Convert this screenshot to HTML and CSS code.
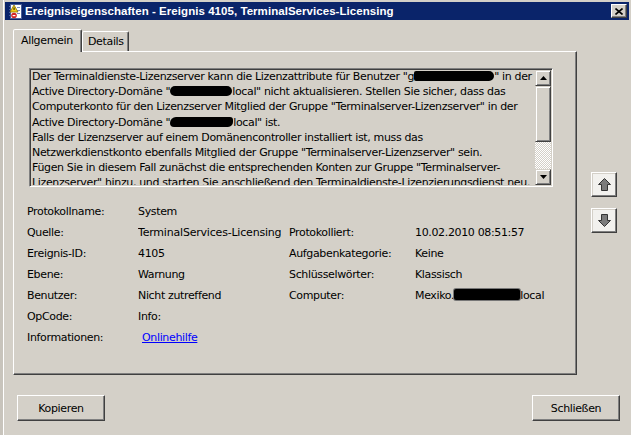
FILE: index.html
```html
<!DOCTYPE html>
<html lang="de">
<head>
<meta charset="utf-8">
<title>Ereigniseigenschaften</title>
<link rel="stylesheet" href="styles.css">
</head>
<body>
<div class="window">
  <div class="titlebar">
    <svg class="app-icon" width="13" height="15" viewBox="0 0 13 15">
      <rect x="1.5" y="0.5" width="11" height="14" fill="#fff" stroke="#4a5f9a"/>
      <rect x="0" y="2" width="2" height="1" fill="#4a5f9a"/>
      <rect x="0" y="5" width="2" height="1" fill="#4a5f9a"/>
      <rect x="0" y="8" width="2" height="1" fill="#4a5f9a"/>
      <rect x="0" y="11" width="2" height="1" fill="#4a5f9a"/>
      <rect x="8" y="3" width="3" height="1" fill="#7d8fc0"/>
      <rect x="8" y="6" width="3" height="1" fill="#7d8fc0"/>
      <rect x="8" y="9" width="3" height="1" fill="#7d8fc0"/>
      <polygon points="5,1 9,8 1,8" fill="#f3cf1a" stroke="#8a6d00" stroke-width="0.8"/>
      <rect x="4.6" y="3.5" width="0.9" height="2.4" fill="#000"/>
      <circle cx="5" cy="11.5" r="2.8" fill="#d42424"/>
      <rect x="3.6" y="11" width="2.8" height="1.2" fill="#fff"/>
    </svg>
    <span class="title">Ereigniseigenschaften - Ereignis 4105, TerminalServices-Licensing</span>
    <button class="close" aria-label="Schließen">
      <svg width="8" height="7" viewBox="0 0 8 7"><path d="M0.5 0.5 L7.5 6.5 M7.5 0.5 L0.5 6.5" stroke="#000" stroke-width="1.6"/></svg>
    </button>
  </div>

  <div class="client">
    <div class="main">
      <div class="tabs">
        <div class="tabstrip">
          <div class="tab active">Allgemein</div>
          <div class="tab">Details</div>
        </div>
        <div class="panel">
          <div class="desc">
            <div class="desc-text">
              <div class="line">Der Terminaldienste-Lizenzserver kann die Lizenzattribute für Benutzer "g<span class="blot blot-a"></span>" in der</div>
              <div class="line">Active Directory-Domäne "<span class="blot blot-b"></span>local" nicht aktualisieren. Stellen Sie sicher, dass das</div>
              <div class="line">Computerkonto für den Lizenzserver Mitglied der Gruppe "Terminalserver-Lizenzserver" in der</div>
              <div class="line">Active Directory-Domäne "<span class="blot blot-c"></span>local" ist.</div>
              <div class="line">Falls der Lizenzserver auf einem Domänencontroller installiert ist, muss das</div>
              <div class="line">Netzwerkdienstkonto ebenfalls Mitglied der Gruppe "Terminalserver-Lizenzserver" sein.</div>
              <div class="line">Fügen Sie in diesem Fall zunächst die entsprechenden Konten zur Gruppe "Terminalserver-</div>
              <div class="line">Lizenzserver" hinzu, und starten Sie anschließend den Terminaldienste-Lizenzierungsdienst neu.</div>
            </div>
            <div class="vscroll">
              <div class="sbtn">
                <svg width="7" height="4" viewBox="0 0 7 4"><polygon points="3.5,0 7,4 0,4" fill="#000"/></svg>
              </div>
              <div class="thumb"></div>
              <div class="track"></div>
              <div class="sbtn">
                <svg width="7" height="4" viewBox="0 0 7 4"><polygon points="0,0 7,0 3.5,4" fill="#000"/></svg>
              </div>
            </div>
          </div>

          <div class="props">
            <div class="lbl">Protokollname:</div><div class="val">System</div><div></div><div></div>
            <div class="lbl">Quelle:</div><div class="val clip">TerminalServices-Licensing</div><div class="lbl">Protokolliert:</div><div class="val">10.02.2010 08:51:57</div>
            <div class="lbl">Ereignis-ID:</div><div class="val">4105</div><div class="lbl">Aufgabenkategorie:</div><div class="val">Keine</div>
            <div class="lbl">Ebene:</div><div class="val">Warnung</div><div class="lbl">Schlüsselwörter:</div><div class="val">Klassisch</div>
            <div class="lbl">Benutzer:</div><div class="val">Nicht zutreffend</div><div class="lbl">Computer:</div><div class="val">Mexiko.<span class="blot blot-d"></span>local</div>
            <div class="lbl">OpCode:</div><div class="val">Info:</div><div></div><div></div>
            <div class="lbl">Informationen:</div><div class="val"><a class="link" href="#">Onlinehilfe</a></div><div></div><div></div>
          </div>
        </div>
      </div>

      <div class="nav">
        <button class="navbtn" aria-label="Vorheriges Ereignis">
          <svg width="13" height="13" viewBox="0 0 13 13"><polygon points="6.5,0.5 12.5,6.5 9.5,6.5 9.5,12.5 3.5,12.5 3.5,6.5 0.5,6.5" fill="#7b7b7b" stroke="#333" stroke-width="1" stroke-linejoin="round"/></svg>
        </button>
        <button class="navbtn" aria-label="Nächstes Ereignis">
          <svg width="13" height="13" viewBox="0 0 13 13"><polygon points="6.5,12.5 12.5,6.5 9.5,6.5 9.5,0.5 3.5,0.5 3.5,6.5 0.5,6.5" fill="#7b7b7b" stroke="#333" stroke-width="1" stroke-linejoin="round"/></svg>
        </button>
      </div>
    </div>

    <div class="footer">
      <button class="btn">Kopieren</button>
      <button class="btn">Schließen</button>
    </div>
  </div>
</div>
</body>
</html>
```

FILE: styles.css
```css
* { box-sizing: border-box; }

html, body {
  margin: 0;
  width: 631px;
  height: 435px;
  overflow: hidden;
  background: #d4d0c8;
}

body {
  font-family: "DejaVu Sans", Verdana, sans-serif;
  font-size: 11px;
  letter-spacing: -0.35px;
  color: #000;
}

.window {
  height: 435px;
  padding: 2px 2px 0 5px;
  background: linear-gradient(to right, #c8c4bc 0 3px, #ffffff 3px 4px, #d4d0c8 4px);
  display: flex;
  flex-direction: column;
}

/* title bar */
.titlebar {
  height: 18px;
  background: #0a246a;
  display: flex;
  align-items: center;
  padding-left: 4px;
  padding-right: 2px;
}

.app-icon { flex: none; }

.title {
  margin-left: 3px;
  flex: 1;
  color: #fff;
  font-family: "Liberation Sans", Arial, sans-serif;
  font-weight: bold;
  font-size: 11.5px;
  letter-spacing: 0.05px;
  white-space: nowrap;
}

.close {
  width: 16px;
  height: 14px;
  padding: 0;
  margin: 0;
  background: #d4d0c8;
  border: 1px solid;
  border-color: #fff #404040 #404040 #fff;
  box-shadow: inset -1px -1px #808080;
  display: flex;
  align-items: center;
  justify-content: center;
}

/* client area */
.client {
  flex: 1;
  display: flex;
  flex-direction: column;
  padding-top: 9px;
}

.main {
  display: flex;
  padding-left: 8px;
}

.tabs {
  width: 564px;
  display: flex;
  flex-direction: column;
}

.tabstrip {
  height: 22px;
  display: flex;
  align-items: flex-end;
}

.tab {
  height: 20px;
  width: 47px;
  padding-left: 5px;
  padding-top: 3px;
  border: 1px solid;
  border-bottom: 0;
  border-color: #fff #404040 transparent #fff;
  border-radius: 2px 2px 0 0;
  box-shadow: inset -1px 0 #808080;
  background: #d4d0c8;
  white-space: nowrap;
}

.tab.active {
  height: 23px;
  width: 69px;
  padding-left: 7px;
  padding-top: 4px;
  margin-bottom: -1px;
  position: relative;
  z-index: 1;
}

.panel {
  height: 324px;
  border: 1px solid;
  border-color: #fff #404040 #404040 #fff;
  box-shadow: inset -1px -1px #808080;
  padding: 16px 0 0 13px;
}

/* description box */
.desc {
  width: 524px;
  height: 119px;
  margin-left: 2px;
  border: 1px solid;
  border-color: #808080 #fff #fff #808080;
  box-shadow: inset 1px 1px #404040, inset -1px -1px #d4d0c8;
  padding: 1px;
  display: flex;
}

.desc-text {
  flex: 1;
  overflow: hidden;
  padding-left: 1px;
  margin-top: -1px;
  line-height: 15.2px;
}

.line { white-space: nowrap; }

.vscroll {
  width: 16px;
  display: flex;
  flex-direction: column;
}

.sbtn, .thumb {
  background: #d4d0c8;
  border: 1px solid;
  border-color: #d4d0c8 #404040 #404040 #d4d0c8;
  box-shadow: inset 1px 1px #fff, inset -1px -1px #808080;
}

.sbtn {
  height: 16px;
  display: flex;
  align-items: center;
  justify-content: center;
}

.thumb { height: 56px; }

.track {
  flex: 1;
  background: repeating-conic-gradient(#ffffff 0 25%, #d4d0c8 0 50%) 0 0 / 2px 2px;
}

.blot {
  display: inline-block;
  height: 10px;
  background: #000;
  border-radius: 5px;
  vertical-align: -1px;
}
.blot-a { width: 80px; border-radius: 2px 5px 5px 2px; }
.blot-b { width: 62px; }
.blot-c { width: 63px; border-radius: 6px 3px 5px 4px; }
.blot-d { width: 66px; height: 11px; border-radius: 2px; box-shadow: 0 0 0 1px #777; }

/* properties */
.props {
  margin-top: 14px;
  display: grid;
  grid-template-columns: 111px 151px 126px 1fr;
  grid-auto-rows: 21px;
  align-items: center;
}

.val { white-space: nowrap; }
.val.clip { width: 143px; overflow: hidden; letter-spacing: -0.2px; }

.link {
  color: #0000ff;
  text-decoration: underline;
  margin-left: 4px;
}

/* previous / next */
.nav {
  padding-top: 143px;
  margin-left: 14px;
  display: flex;
  flex-direction: column;
  gap: 11px;
}

.navbtn {
  width: 26px;
  height: 25px;
  padding: 0;
  margin: 0;
  background: #f2f1ee;
  border: 1px solid;
  border-color: #fff #404040 #404040 #fff;
  box-shadow: inset -1px -1px #808080, inset 1px 1px #d4d0c8;
  display: flex;
  align-items: center;
  justify-content: center;
}

/* footer */
.footer {
  display: flex;
  justify-content: space-between;
  padding: 20px 9px 0 12px;
}

.btn {
  width: 88px;
  height: 26px;
  margin: 0;
  padding: 0;
  font: inherit;
  letter-spacing: inherit;
  color: #000;
  background: #d4d0c8;
  border: 1px solid;
  border-color: #fff #404040 #404040 #fff;
  box-shadow: inset -1px -1px #808080;
}
```
